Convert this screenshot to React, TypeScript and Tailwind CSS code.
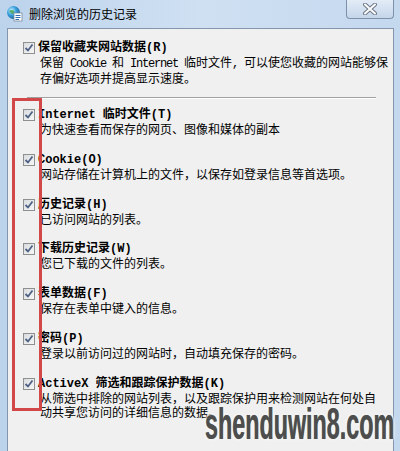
import React from "react";

const CJK = "font-['Noto_Sans_CJK_SC','Noto_Sans',sans-serif]";
const TITLE = "font-['Liberation_Mono','Noto_Sans_CJK_SC',monospace]";

type Item = { title: string; lines: React.ReactNode[] };

const Mono = ({ children }: { children: React.ReactNode }) => (
  <span className="font-['Liberation_Mono',monospace] tracking-[-1.2px]">{children}</span>
);

const ITEMS: Item[] = [
  { title: "Internet 临时文件(T)", lines: ["为快速查看而保存的网页、图像和媒体的副本"] },
  { title: "Cookie(O)", lines: ["网站存储在计算机上的文件，以保存如登录信息等首选项。"] },
  { title: "历史记录(H)", lines: ["已访问网站的列表。"] },
  { title: "下载历史记录(W)", lines: ["您已下载的文件的列表。"] },
  { title: "表单数据(F)", lines: ["保存在表单中键入的信息。"] },
  { title: "密码(P)", lines: ["登录以前访问过的网站时，自动填充保存的密码。"] },
  {
    title: "ActiveX 筛选和跟踪保护数据(K)",
    lines: ["从筛选中排除的网站列表，以及跟踪保护用来检测网站在何处自", "动共享您访问的详细信息的数据。"],
  },
];

function CheckBox() {
  return (
    <div className="mt-[1px] h-[12px] w-[12px] shrink-0 border border-[#8e8f8f] bg-gradient-to-br from-[#d9dcdf] to-[#f7f7f7] flex items-center justify-center">
      <svg width="10" height="10" viewBox="0 0 10 10">
        <path d="M1.5 5 L4 7.5 L8.5 1.5" fill="none" stroke="#4d6185" strokeWidth="1.8" />
      </svg>
    </div>
  );
}

function Row({ title, lines }: Item) {
  return (
    <div className="flex gap-[3px]">
      <CheckBox />
      <div className="flex flex-col leading-[14px] text-[12px] text-black">
        <div className={`${TITLE} font-bold`}>{title}</div>
        {lines.map((l, i) => (
          <div key={i} className={`${CJK} pl-[2px] whitespace-nowrap`}>
            {l}
          </div>
        ))}
      </div>
    </div>
  );
}

function IeIcon() {
  return (
    <svg width="17" height="17" viewBox="0 0 17 17">
      <defs>
        <radialGradient id="g" cx="0.35" cy="0.35" r="0.7">
          <stop offset="0" stopColor="#c9f0ff" />
          <stop offset="0.5" stopColor="#3aa0dc" />
          <stop offset="1" stopColor="#1c5f9c" />
        </radialGradient>
      </defs>
      <circle cx="7.5" cy="7.5" r="6.5" fill="url(#g)" />
      <path d="M3 6 Q6 4 8 6 Q9 8 6 9 Z" fill="#4aa348" opacity="0.8" />
      <rect x="8" y="8" width="8" height="8" fill="#fff" stroke="#7a8a9c" strokeWidth="0.8" />
      <path d="M9.5 10.5 H14.5 M9.5 12.5 H14.5 M9.5 14.5 H13" stroke="#2f6fb0" strokeWidth="1" />
    </svg>
  );
}

export default function App() {
  return (
    <div className="relative w-[400px] h-[451px] overflow-hidden flex flex-col bg-gradient-to-r from-[#bcd3ec] via-[#cfe0f2] to-[#c4d8ee]">
      <div className="h-[28px] shrink-0 flex items-start">
        <div className="ml-[6px] mt-[5px]">
          <IeIcon />
        </div>
        <div className={`${CJK} ml-[6px] mt-[6px] text-[12px] leading-[16px] text-black`}>删除浏览的历史记录</div>
        <div className="ml-auto mr-[6px] h-[19px] w-[48px] rounded-b-[4px] border border-t-0 border-[#7e91ab] bg-gradient-to-b from-[#e3ecf7] to-[#c5d6ea] flex items-center justify-center">
          <svg width="16" height="12" viewBox="0 0 16 12">
            <path d="M3 1.5 L13 10.5 M13 1.5 L3 10.5" stroke="#6d7787" strokeWidth="4" strokeLinecap="round" />
            <path d="M3 1.5 L13 10.5 M13 1.5 L3 10.5" stroke="#fdfdfd" strokeWidth="2" strokeLinecap="round" />
          </svg>
        </div>
      </div>

      <div className="relative flex-1 ml-[7px] mr-[6px] border border-b-0 border-[#8496ae] bg-[#f0f0f0] pl-[15px] pt-[12px]">
        <Row
          title="保留收藏夹网站数据(R)"
          lines={[
            <>
              保留<Mono> Cookie </Mono>和<Mono> Internet </Mono>临时文件<Mono>, </Mono>可以使您收藏的网站能够保
            </>,
            "存偏好选项并提高显示速度。",
          ]}
        />
        <div className="mt-[12px] ml-[4px] mr-[17px] h-[2px] border-t border-[#a0a0a0] border-b border-b-white" />
        <div className="mt-[9px] flex flex-col gap-[16.8px]">
          {ITEMS.map((it) => (
            <Row key={it.title} {...it} />
          ))}
        </div>

        <div className="absolute left-[4px] top-[69px] h-[313px] w-[30px] border-[3px] border-[#d24848]" />
      </div>

      {/* watermark */}
      <div className="absolute left-[205px] top-[399px] w-[188px] overflow-visible">
        <div className="origin-left scale-x-[0.53] font-['Liberation_Sans',sans-serif] font-bold text-[44px] leading-[50px] text-[#4d4d4d] whitespace-nowrap [text-shadow:0_0_1px_#777,0_0_3px_#fff,0_0_4px_#fff,0_0_5px_#fff]">
          shenduwin8.com
        </div>
      </div>
    </div>
  );
}
